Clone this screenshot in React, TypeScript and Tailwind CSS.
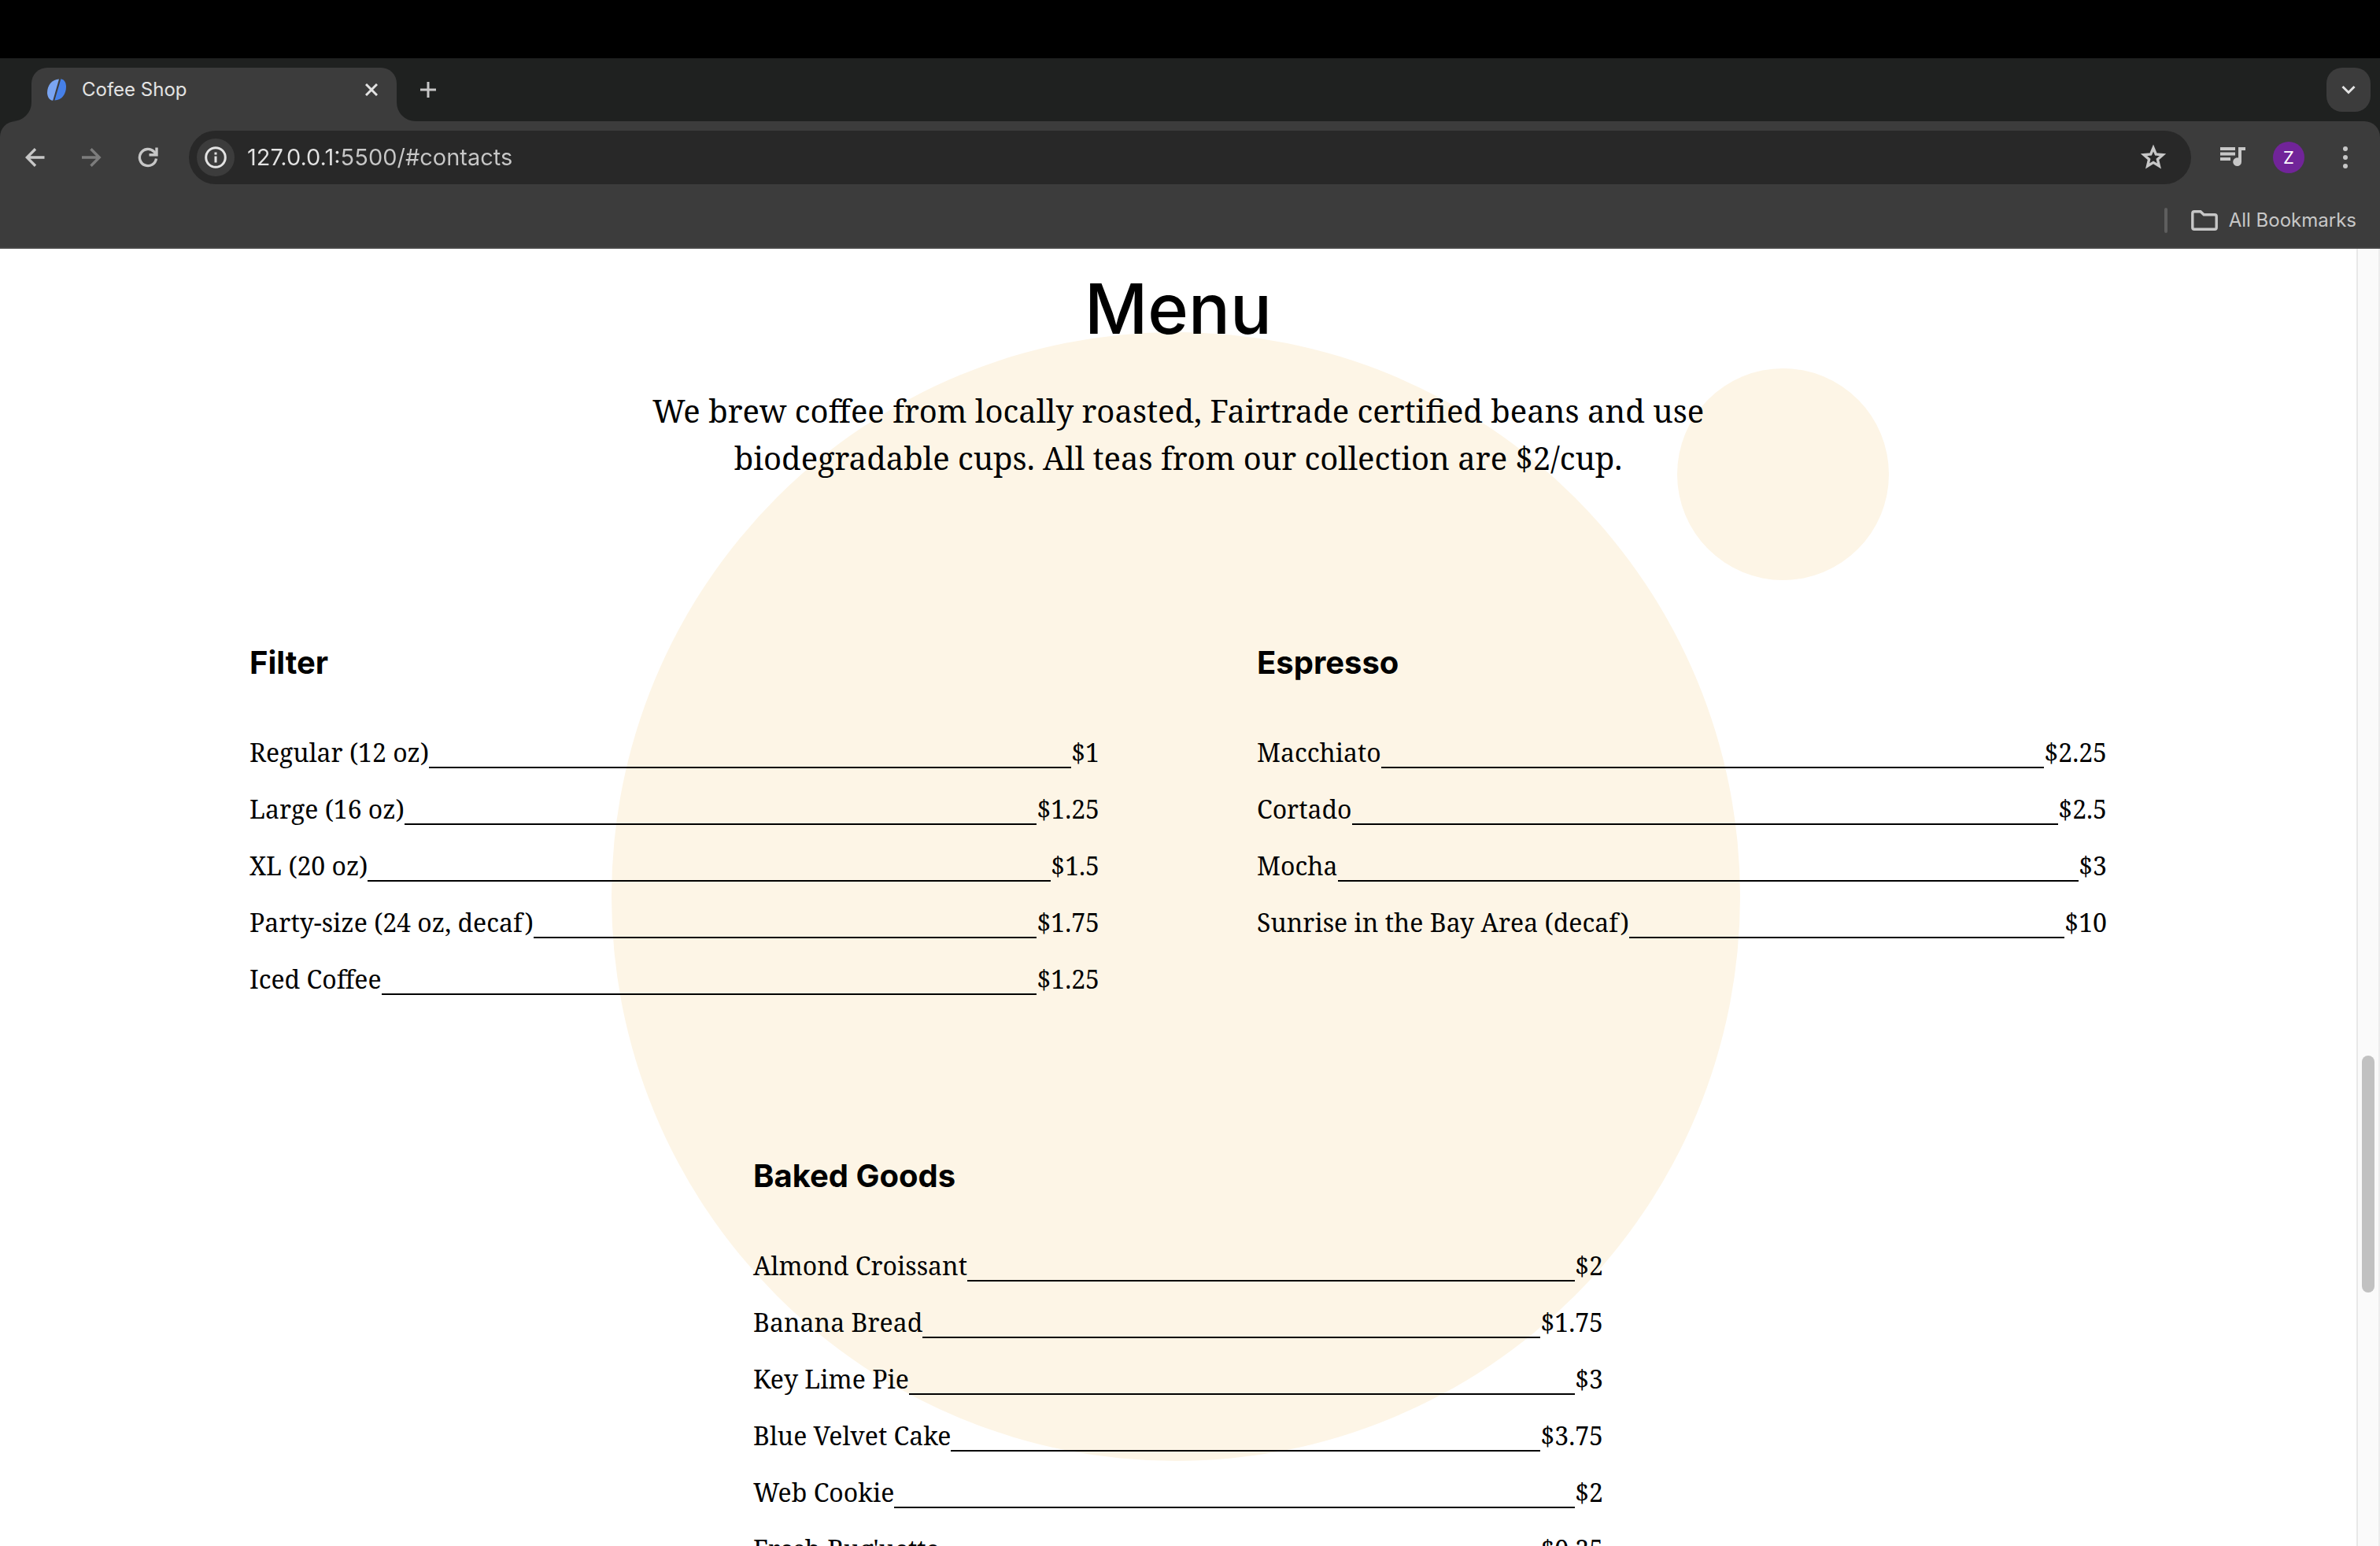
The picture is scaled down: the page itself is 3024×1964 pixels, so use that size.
import React from "react";

type Item = { name: string; price: string };

const filter: Item[] = [
  { name: "Regular (12 oz)", price: "$1" },
  { name: "Large (16 oz)", price: "$1.25" },
  { name: "XL (20 oz)", price: "$1.5" },
  { name: "Party-size (24 oz, decaf)", price: "$1.75" },
  { name: "Iced Coffee", price: "$1.25" },
];

const espresso: Item[] = [
  { name: "Macchiato", price: "$2.25" },
  { name: "Cortado", price: "$2.5" },
  { name: "Mocha", price: "$3" },
  { name: "Sunrise in the Bay Area (decaf)", price: "$10" },
];

const baked: Item[] = [
  { name: "Almond Croissant", price: "$2" },
  { name: "Banana Bread", price: "$1.75" },
  { name: "Key Lime Pie", price: "$3" },
  { name: "Blue Velvet Cake", price: "$3.75" },
  { name: "Web Cookie", price: "$2" },
  { name: "Fresh Bug'uette", price: "$0.25" },
];

function BeanIcon() {
  return (
    <svg viewBox="0 0 24 28" className="h-7 w-6" aria-hidden="true">
      <path d="M15 0.4C6.5 0.6 0 8 0 17.5C0 22.8 2.6 27.4 7.2 27.8Z" fill="#7aa5f2" />
      <path d="M17.4 0.2C21.6 0.8 24 4.8 24 10.2C24 19.5 18.5 27.4 9.4 27.4Z" fill="#4680e8" />
    </svg>
  );
}

function TabStrip() {
  return (
    <div className="flex h-20 shrink-0 items-end bg-[#1f2120] pr-3 pl-4">
      <div className="size-6 bg-[#3c3c3c]">
        <div className="size-6 rounded-br-[24px] bg-[#1f2120]" />
      </div>
      <div className="flex h-[68px] w-[464px] items-center rounded-t-[20px] bg-[#3c3c3c] pr-6 pb-3 pl-5">
        <BeanIcon />
        <span className="ml-5 flex-1 text-2xl text-[#e3e3e3]">Cofee Shop</span>
        <button aria-label="Close tab" className="text-[#e3e3e3]">
          <svg viewBox="0 0 16 16" className="size-4" fill="none" stroke="currentColor" strokeWidth="3">
            <path d="M1 1L15 15M15 1L1 15" />
          </svg>
        </button>
      </div>
      <div className="size-6 bg-[#3c3c3c]">
        <div className="size-6 rounded-bl-[24px] bg-[#1f2120]" />
      </div>
      <button aria-label="New tab" className="mb-[30px] ml-1.5 text-[#c7c7c7]">
        <svg viewBox="0 0 20 20" className="size-5" fill="none" stroke="currentColor" strokeWidth="3">
          <path d="M10 0V20M0 10H20" />
        </svg>
      </button>
      <button
        aria-label="Search tabs"
        className="mb-3 ml-auto flex size-14 items-center justify-center rounded-[20px] bg-[#3c3c3c] text-[#e3e3e3]"
      >
        <svg viewBox="0 0 18 12" className="h-3 w-[18px]" fill="none" stroke="currentColor" strokeWidth="3">
          <path d="M1.5 2L9 9.5L16.5 2" />
        </svg>
      </button>
    </div>
  );
}

function Toolbar() {
  return (
    <div className="flex h-[92px] items-center pr-9 pl-8 text-[#c7c7c7]">
      <button aria-label="Back">
        <svg viewBox="0 0 26 26" className="size-[26px]" fill="none" stroke="currentColor" strokeWidth="3.4">
          <path d="M24.500 13H3M13 2.300L2.300 13L13 23.700" />
        </svg>
      </button>
      <button aria-label="Forward" className="ml-[45px] text-[#7c7c7c]">
        <svg viewBox="0 0 26 26" className="size-[26px]" fill="none" stroke="currentColor" strokeWidth="3.4">
          <path d="M1 13H22.500M12.500 2.300L23.200 13L12.500 23.700" />
        </svg>
      </button>
      <button aria-label="Reload" className="ml-[46px]">
        <svg viewBox="0 0 26 26" className="size-[26px]" fill="none" stroke="currentColor" strokeWidth="3.4">
          <path d="M23.500 14.500A10.600 10.600 0 1 1 20.500 5.500L23.500 8.500" />
          <path d="M24 0.500V9.800H14.500" />
        </svg>
      </button>
      <div className="ml-[39px] flex h-[68px] flex-1 items-center rounded-full bg-[#282828] pr-[31px] pl-2.5">
        <button
          aria-label="Site information"
          className="flex size-12 items-center justify-center rounded-full bg-[#3c3c3c] text-[#e3e3e3]"
        >
          <svg viewBox="0 0 28 28" className="size-7" fill="none" stroke="currentColor" strokeWidth="3">
            <circle cx="14" cy="14" r="12.3" />
            <path d="M14 12.500V20.500M14 7.500V10.500" />
          </svg>
        </button>
        <input
          aria-label="Address"
          defaultValue="127.0.0.1:5500/#contacts"
          className="ml-4 h-10 min-w-0 flex-1 bg-[linear-gradient(90deg,#e3e3e3_120px,#c7c7c7_120px)] bg-clip-text text-[29px] text-transparent outline-none"
        />
        <button aria-label="Bookmark this page">
          <svg viewBox="0 0 34 34" className="size-[34px]" fill="none" stroke="currentColor" strokeWidth="3.4">
            <path d="M17 5L20.300 13L29 13.700L22.400 19.400L24.400 28L17 23.400L9.600 28L11.600 19.400L5 13.700L13.700 13Z" />
          </svg>
        </button>
      </div>
      <button aria-label="Media controls" className="ml-[37px]">
        <svg viewBox="0 0 32 26" className="h-[26px] w-8" fill="currentColor">
          <path d="M0 0H19V4H0ZM0 6.500H19V10.500H0ZM0 13H13V17H0Z" />
          <path d="M23 0H32V4H27V18.500A5.400 5.400 0 1 1 23 13.500Z" />
        </svg>
      </button>
      <button
        aria-label="Profile"
        className="ml-[35px] flex size-10 items-center justify-center rounded-full bg-[#712499] text-[22px] text-white"
      >
        Z
      </button>
      <button aria-label="More options" className="ml-[44px]">
        <svg viewBox="0 0 16 28" className="h-7 w-4" fill="currentColor">
          <circle cx="8" cy="3" r="3" />
          <circle cx="8" cy="14" r="3" />
          <circle cx="8" cy="25" r="3" />
        </svg>
      </button>
    </div>
  );
}

function BookmarkBar() {
  return (
    <div className="flex h-[70px] items-center justify-end border-b-2 border-[#474747] pr-[30px] text-[#c7c7c7]">
      <span className="h-8 w-1 rounded-full bg-[#5e5e5e]" />
      <button className="ml-[30px] flex items-center text-2xl">
        <svg viewBox="0 0 34 26" className="mr-3.5 h-[26px] w-[34px]" fill="none" stroke="currentColor" strokeWidth="3.4">
          <path d="M4 1.800H12L16.200 5.800H30Q32.200 5.800 32.200 8V22Q32.200 24.200 30 24.200H4Q1.800 24.200 1.800 22V4Q1.800 1.800 4 1.800Z" />
        </svg>
        All Bookmarks
      </button>
    </div>
  );
}

function MenuList({ title, items }: { title: string; items: Item[] }) {
  return (
    <section className="w-[1080px]">
      <h2 className="font-[Inter] text-[40px] leading-[48px] font-bold">{title}</h2>
      <ul className="mt-[70px] flex flex-col gap-8 text-[32px] leading-[40px]">
        {items.map((item) => (
          <li key={item.name} className="flex">
            <span>{item.name}</span>
            <span className="flex-1 border-b-2 border-black" />
            <span>{item.price}</span>
          </li>
        ))}
      </ul>
    </section>
  );
}

export default function App() {
  return (
    <div className="flex h-screen flex-col overflow-hidden bg-black pt-[74px] font-[Inter,sans-serif]">
      <TabStrip />
      <div className="shrink-0 bg-[#1f2120]">
        <div className="rounded-t-[20px] bg-[#3c3c3c]">
          <Toolbar />
          <BookmarkBar />
        </div>
      </div>
      <div className="flex min-h-0 flex-1 bg-white">
        <main className="relative isolate min-w-0 flex-1 overflow-hidden font-['Noto_Serif','Droid_Serif','Liberation_Serif',serif] text-black">
          <div className="absolute top-[106px] left-1/2 -z-10 -ml-[720px] size-[1434px] rounded-full bg-[#fdf5e6]" />
          <div className="absolute top-[152px] left-1/2 -z-10 ml-[634px] size-[269px] rounded-full bg-[#fdf5e6]" />
          <h1 className="pt-[31px] text-center font-[Inter] text-[88px] leading-[90px] font-medium">Menu</h1>
          <p className="mx-auto mt-[55px] max-w-[1400px] text-center text-[40px] leading-[60px]">
            We brew coffee from locally roasted, Fairtrade certified beans and use biodegradable cups. All teas from our
            collection are $2/cup.
          </p>
          <div className="mt-[206px] flex flex-wrap justify-center gap-x-[200px] gap-y-[206px]">
            <MenuList title="Filter" items={filter} />
            <MenuList title="Espresso" items={espresso} />
            <MenuList title="Baked Goods" items={baked} />
          </div>
        </main>
        <div className="flex w-[30px] flex-col items-center border-r-2 border-l-2 border-r-[#ededed] border-l-[#e8e8e8] bg-[#fafafa]">
          <div className="grow-[1025]" />
          <div className="w-4 grow-[301] rounded-full bg-[#c1c1c1]" />
          <div className="grow-[322]" />
        </div>
      </div>
    </div>
  );
}
